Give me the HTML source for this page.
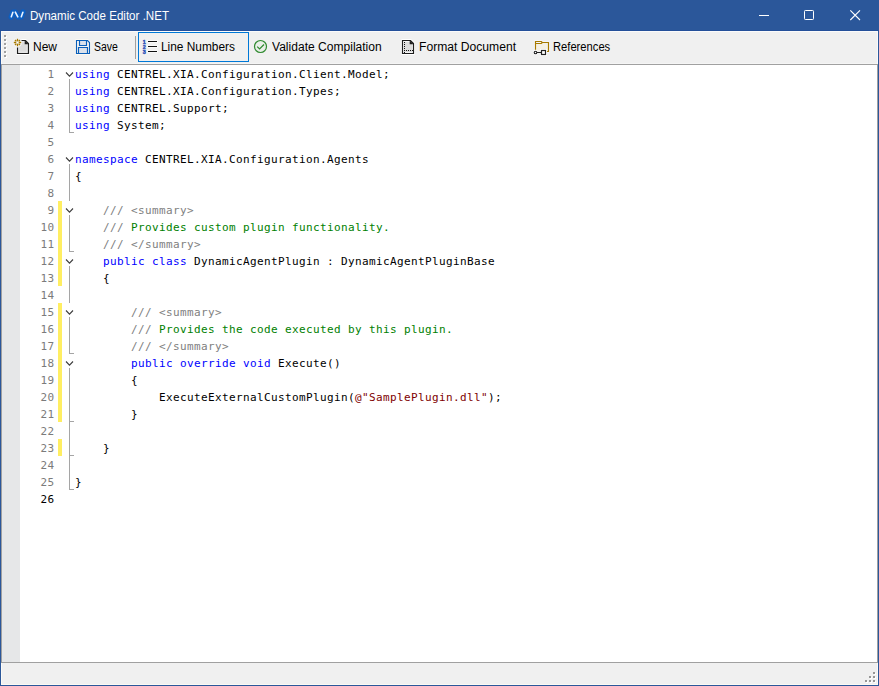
<!DOCTYPE html>
<html><head><meta charset="utf-8"><title>Dynamic Code Editor .NET</title>
<style>
html,body{margin:0;padding:0;}
body{width:879px;height:686px;overflow:hidden;background:#f0f0f0;position:relative;font-family:"Liberation Sans",sans-serif;font-size:12px;color:#000;}
.abs,#win *{position:absolute;}
#win{position:absolute;left:0;top:0;width:879px;height:686px;background:#f0f0f0;overflow:hidden;}
#title{left:0;top:0;width:879px;height:31px;background:#2b579a;}
#title .cap{left:30px;top:0;height:31px;line-height:31px;color:#fff;font-size:12px;white-space:nowrap;}
#bl{left:0;top:31px;width:1px;height:655px;background:#2b579a;}
#br{left:878px;top:31px;width:1px;height:655px;background:#2b579a;}
#bb{left:0;top:685px;width:879px;height:1px;background:#2b579a;}
#tb{left:1px;top:31px;width:877px;height:33px;background:#f0f0f0;}
.tbt{top:0;height:33px;line-height:32px;font-size:12px;white-space:nowrap;color:#000;}
#ed{left:1px;top:64px;width:877px;height:599px;background:#fff;box-sizing:border-box;border:1px solid #a0a0a0;}
#mg{left:2px;top:65px;width:18px;height:597px;background:#e6e7e8;}
.ln{left:21.5px;width:33px;height:17px;line-height:17px;text-align:right;color:#7b7b7b;font-family:"DejaVu Sans Mono","Liberation Mono",monospace;font-size:11px;letter-spacing:0.378px;}
.ln.cur{color:#000;}
.cl{left:75px;height:17px;line-height:17px;white-space:pre;font-family:"DejaVu Sans Mono","Liberation Mono",monospace;font-size:11px;letter-spacing:0.378px;color:#000;}
.cl span{position:static !important;}
.k{color:#0000ff;}.c{color:#808080;}.g{color:#008000;}.s{color:#800000;}
.yb{left:58px;width:4px;background:#ffee62;}
.fl{left:69px;width:1px;background:#a5a5a5;}
.ft{left:69px;width:5px;height:1px;background:#a5a5a5;}
.cv{left:65px;background:#fff;}

#title .cap{transform-origin:0 50%;transform:scaleX(0.965);top:1px;}
#tdark{left:0;top:30px;width:879px;height:1px;background:#24509a;}
.tbt{transform-origin:0 50%;}
#tbhl{left:0;top:0;width:877px;height:1px;background:#fbfbfb;}
#tbhl2{left:0;top:0;width:1px;height:33px;background:#fcfaf6;}
#tbhl3{left:0;top:32px;width:877px;height:1px;background:#f5f5f5;}
#tbhl4{left:876px;top:0;width:1px;height:33px;background:#f9f9f9;}
#sep1{left:134px;top:5px;width:1px;height:23px;background:#a0a0a0;}
#lnbtn{left:137px;top:1px;width:111px;height:30px;box-sizing:border-box;border:1px solid #0078d7;background:#f0f0f0;}
#sb{left:1px;top:663px;width:877px;height:22px;background:#f0f0f0;}
</style></head><body>
<div id="win">
<div id="title">
<svg style="left:8px;top:8px" width="18" height="13" viewBox="8 8 18 13">
<path d="M11.2 17L13 12H15.2L18 17H21.2L23 12" fill="none" stroke="#0c5fc2" stroke-width="5.2" stroke-linecap="round" stroke-linejoin="round"/>
<path d="M11.3 16.8L12.9 12.2" stroke="#eaf3ff" stroke-width="1.6" fill="none" stroke-linecap="round"/>
<path d="M15.3 12.2L17.8 16.8" stroke="#eaf3ff" stroke-width="1.6" fill="none" stroke-linecap="round"/>
<path d="M21.3 16.8L22.9 12.2" stroke="#eaf3ff" stroke-width="1.6" fill="none" stroke-linecap="round"/>
</svg>
<div class="cap">Dynamic Code Editor .NET</div>
<svg style="left:750px;top:0" width="129" height="31" viewBox="750 0 129 31" shape-rendering="crispEdges">
<rect x="759" y="15" width="10" height="1" fill="#fff"/>
<rect x="804.5" y="10.5" width="9" height="9" rx="0.8" fill="none" stroke="#fff" stroke-width="1" shape-rendering="geometricPrecision"/>
<path d="M850.3 10.3L860 20M860 10.3L850.3 20" stroke="#fff" stroke-width="1.1" fill="none" shape-rendering="geometricPrecision"/>
</svg>
<div id="tdark"></div>
</div>
<div id="tb">
<div id="tbhl"></div><div id="tbhl2"></div><div id="tbhl3"></div><div id="tbhl4"></div>
<svg id="grip" style="left:3px;top:4px" width="4" height="24" viewBox="0 0 4 24" shape-rendering="crispEdges">
<g fill="#fff"><rect x="1" y="1" width="2" height="2"/><rect x="1" y="5" width="2" height="2"/><rect x="1" y="9" width="2" height="2"/><rect x="1" y="13" width="2" height="2"/><rect x="1" y="17" width="2" height="2"/><rect x="1" y="21" width="2" height="2"/></g>
<g fill="#a0a0a0"><rect x="0" y="0" width="2" height="2"/><rect x="0" y="4" width="2" height="2"/><rect x="0" y="8" width="2" height="2"/><rect x="0" y="12" width="2" height="2"/><rect x="0" y="16" width="2" height="2"/><rect x="0" y="20" width="2" height="2"/></g>
</svg>
<!-- New icon -->
<svg style="left:11px;top:7px" width="18" height="17" viewBox="12 38 18 17">
<path d="M17.5 47.5V53.5H28.5V43.5L25.5 40.5H21.5" fill="none" stroke="#fff" stroke-width="3" stroke-linejoin="round"/>
<path d="M18 41H25.5L28 43.5V53H18Z" fill="#dcdcdc"/>
<path d="M18.8 41.8H25.2V43.8H27.2V52.2H18.8Z" fill="none" stroke="#f4f4f4" stroke-width="0.6"/>
<circle cx="17.5" cy="42.5" r="4.6" fill="#f4f4f4"/>
<path d="M17.5 47.5V53.5H28.5V43.5L25.5 40.5H21.5" fill="none" stroke="#1e1e1e" stroke-width="1.2"/>
<path d="M24.7 40.3V44.3H28.7Z" fill="#1e1e1e"/>
<g stroke="#a87a00" stroke-width="1.3" stroke-linecap="butt"><path d="M17.5 38.8V41.5M17.5 43.5V46.2M13.8 42.5H16.5M18.5 42.5H21.2"/><path d="M15 40L16.3 41.3M20 40L18.7 41.3M15 45L16.3 43.7M20 45L18.7 43.7" stroke-width="1.3"/></g>
<path d="M17.5 41.4L18.6 42.5L17.5 43.6L16.4 42.5Z" fill="#fff"/>
</svg>
<div class="tbt" style="left:32px;">New</div>
<!-- Save icon -->
<svg style="left:74px;top:8px" width="16" height="16" viewBox="75 39 16 16">
<path d="M76.5 40.5H87.5L89.5 42.5V53.5H76.5Z" fill="#f4f4f4" stroke="#fbf8f2" stroke-width="3" stroke-linejoin="round"/>
<rect x="80" y="41" width="6" height="4" fill="#dbe2ec"/><rect x="79" y="48" width="8" height="5" fill="#dbe2ec"/>
<path d="M76.5 40.5H87.5L89.5 42.5V53.5H76.5Z" fill="none" stroke="#0a5fba" stroke-width="1.15"/>
<path d="M79.5 40.5V45.5H86.5V40.5" fill="none" stroke="#0a5fba" stroke-width="1.15"/>
<path d="M78.5 53.5V47.5H87.5V53.5" fill="none" stroke="#0a5fba" stroke-width="1.15"/>
</svg>
<div class="tbt" style="left:93px;transform:scaleX(0.875)">Save</div>
<div id="sep1"></div>
<div id="lnbtn"></div>
<!-- Line numbers icon -->
<svg style="left:141px;top:7px" width="18" height="17" viewBox="142 38 18 17">
<g fill="#f8f8f8"><rect x="147" y="40" width="11" height="3"/><rect x="147" y="45" width="11" height="3"/><rect x="147" y="50" width="11" height="3"/></g>
<g fill="#111" shape-rendering="crispEdges"><rect x="148" y="41" width="9" height="1"/><rect x="148" y="46" width="9" height="1"/><rect x="148" y="51" width="9" height="1"/></g>
<g font-family="Liberation Sans, sans-serif" font-size="5.4" font-weight="bold" fill="#2f55b8" stroke="#2f55b8" stroke-width="0.45"><text x="142.8" y="43.9">1</text><text x="142.8" y="48.9">2</text><text x="142.8" y="53.9">3</text></g>
</svg>
<div class="tbt" style="left:160px;transform:scaleX(0.99)">Line Numbers</div>
<!-- Validate icon -->
<svg style="left:252px;top:7px" width="16" height="16" viewBox="253 38 16 16">
<circle cx="260.5" cy="46.5" r="6" fill="#e9efe8" stroke="#2f8a2f" stroke-width="1.2"/>
<path d="M257.2 46.6L259.6 49L264 44.5" fill="none" stroke="#2f8a2f" stroke-width="1.2"/>
</svg>
<div class="tbt" style="left:271px;transform:scaleX(1.005)">Validate Compilation</div>
<!-- Format icon -->
<svg style="left:400px;top:7px" width="16" height="18" viewBox="401 38 16 18">
<path d="M402.5 40.5H410.5L413.5 43.5V53.5H402.5Z" fill="#dcdcdc" stroke="#fff" stroke-width="3" stroke-linejoin="round"/>
<path d="M403.5 41.5H410L412.5 44V52.5H403.5Z" fill="#dcdcdc" stroke="#f6f6f6" stroke-width="1"/>
<path d="M402.5 40.5H410.5L413.5 43.5V53.5H402.5Z" fill="none" stroke="#1e1e1e" stroke-width="1.2"/>
<path d="M409.7 40.3V44.3H413.7Z" fill="#1e1e1e"/>
<g fill="#111" shape-rendering="crispEdges"><rect x="404" y="42" width="1" height="1"/><rect x="404" y="44" width="1" height="1"/><rect x="404" y="46" width="1" height="1"/><rect x="404" y="48" width="1" height="1"/><rect x="404" y="50" width="1" height="1"/><rect x="404" y="52" width="1" height="1"/><rect x="406" y="50" width="1" height="1"/><rect x="408" y="50" width="1" height="1"/><rect x="410" y="50" width="1" height="1"/><rect x="412" y="50" width="1" height="1"/></g>
</svg>
<div class="tbt" style="left:418px;transform:scaleX(1.011)">Format Document</div>
<!-- References icon -->
<svg style="left:531px;top:7px" width="20" height="19" viewBox="532 38 20 19">
<path d="M535.5 49.5V41.5H541.5L542.5 42.5H548.5V51.5H547" fill="#f5f0e4" stroke="#f6f6fa" stroke-width="3" stroke-linejoin="round"/>
<path d="M536 43H548V51H536Z" fill="#f5f0e4"/>
<path d="M535.5 49.8V41.5H541.3L542.3 42.5H548.5V51.5H547" fill="none" stroke="#a87a00" stroke-width="1.15"/>
<path d="M535.5 43.5H541.3L542.3 42.5" fill="none" stroke="#a87a00" stroke-width="1.15"/>
<path d="M537 52.5H541" stroke="#fff" stroke-width="3"/>
<circle cx="535.5" cy="52.5" r="2.4" fill="#fff"/><rect x="540" y="49" width="7" height="7" fill="#fff"/>
<circle cx="535.5" cy="52.5" r="1.3" fill="#fff" stroke="#222" stroke-width="1.1"/>
<path d="M537 52.5H541" stroke="#222" stroke-width="1.1"/>
<rect x="541.5" y="50.5" width="4" height="4" fill="#fff" stroke="#222" stroke-width="1.2"/>
</svg>
<div class="tbt" style="left:552px;transform:scaleX(0.932)">References</div>
</div>
<div id="ed"></div>
<div id="mg"></div>
<div class="yb" style="top:201px;height:85px"></div>
<div class="yb" style="top:303px;height:119px"></div>
<div class="yb" style="top:439px;height:17px"></div>
<div class="fl" style="top:79px;height:54px"></div>
<div class="ft" style="top:132px"></div>
<div class="fl" style="top:164px;height:326px"></div>
<div class="ft" style="top:489px"></div>
<div class="ft" style="top:251px"></div>
<div class="ft" style="top:353px"></div>
<div class="ft" style="top:421px"></div>
<div class="ft" style="top:455px"></div>
<svg class="cv" style="top:65px" width="9" height="14" viewBox="0 -7 9 14"><path d="M1 0.5 L4.5 4.2 L8 0.5" fill="none" stroke="#3c3c3c" stroke-width="1.1"/></svg>
<svg class="cv" style="top:150px" width="9" height="14" viewBox="0 -7 9 14"><path d="M1 0.5 L4.5 4.2 L8 0.5" fill="none" stroke="#3c3c3c" stroke-width="1.1"/></svg>
<svg class="cv" style="top:201px" width="9" height="14" viewBox="0 -7 9 14"><path d="M1 0.5 L4.5 4.2 L8 0.5" fill="none" stroke="#3c3c3c" stroke-width="1.1"/></svg>
<svg class="cv" style="top:252px" width="9" height="14" viewBox="0 -7 9 14"><path d="M1 0.5 L4.5 4.2 L8 0.5" fill="none" stroke="#3c3c3c" stroke-width="1.1"/></svg>
<svg class="cv" style="top:303px" width="9" height="14" viewBox="0 -7 9 14"><path d="M1 0.5 L4.5 4.2 L8 0.5" fill="none" stroke="#3c3c3c" stroke-width="1.1"/></svg>
<svg class="cv" style="top:354px" width="9" height="14" viewBox="0 -7 9 14"><path d="M1 0.5 L4.5 4.2 L8 0.5" fill="none" stroke="#3c3c3c" stroke-width="1.1"/></svg>
<div class="ln" style="top:66px">1</div>
<div class="cl" style="top:66px"><span class="k">using</span> CENTREL.XIA.Configuration.Client.Model;</div>
<div class="ln" style="top:83px">2</div>
<div class="cl" style="top:83px"><span class="k">using</span> CENTREL.XIA.Configuration.Types;</div>
<div class="ln" style="top:100px">3</div>
<div class="cl" style="top:100px"><span class="k">using</span> CENTREL.Support;</div>
<div class="ln" style="top:117px">4</div>
<div class="cl" style="top:117px"><span class="k">using</span> System;</div>
<div class="ln" style="top:134px">5</div>
<div class="ln" style="top:151px">6</div>
<div class="cl" style="top:151px"><span class="k">namespace</span> CENTREL.XIA.Configuration.Agents</div>
<div class="ln" style="top:168px">7</div>
<div class="cl" style="top:168px">{</div>
<div class="ln" style="top:185px">8</div>
<div class="ln" style="top:202px">9</div>
<div class="cl" style="top:202px">    <span class="c">/// &lt;summary&gt;</span></div>
<div class="ln" style="top:219px">10</div>
<div class="cl" style="top:219px">    <span class="c">/// </span><span class="g">Provides custom plugin functionality.</span></div>
<div class="ln" style="top:236px">11</div>
<div class="cl" style="top:236px">    <span class="c">/// &lt;/summary&gt;</span></div>
<div class="ln" style="top:253px">12</div>
<div class="cl" style="top:253px">    <span class="k">public</span> <span class="k">class</span> DynamicAgentPlugin : DynamicAgentPluginBase</div>
<div class="ln" style="top:270px">13</div>
<div class="cl" style="top:270px">    {</div>
<div class="ln" style="top:287px">14</div>
<div class="ln" style="top:304px">15</div>
<div class="cl" style="top:304px">        <span class="c">/// &lt;summary&gt;</span></div>
<div class="ln" style="top:321px">16</div>
<div class="cl" style="top:321px">        <span class="c">/// </span><span class="g">Provides the code executed by this plugin.</span></div>
<div class="ln" style="top:338px">17</div>
<div class="cl" style="top:338px">        <span class="c">/// &lt;/summary&gt;</span></div>
<div class="ln" style="top:355px">18</div>
<div class="cl" style="top:355px">        <span class="k">public</span> <span class="k">override</span> <span class="k">void</span> Execute()</div>
<div class="ln" style="top:372px">19</div>
<div class="cl" style="top:372px">        {</div>
<div class="ln" style="top:389px">20</div>
<div class="cl" style="top:389px">            ExecuteExternalCustomPlugin(<span class="s">@&quot;SamplePlugin.dll&quot;</span>);</div>
<div class="ln" style="top:406px">21</div>
<div class="cl" style="top:406px">        }</div>
<div class="ln" style="top:423px">22</div>
<div class="ln" style="top:440px">23</div>
<div class="cl" style="top:440px">    }</div>
<div class="ln" style="top:457px">24</div>
<div class="ln" style="top:474px">25</div>
<div class="cl" style="top:474px">}</div>
<div class="ln cur" style="top:491px">26</div>
<div id="sb">
<div style="left:876px;top:0;width:1px;height:22px;background:#fbf9f4"></div>
<div style="left:0;top:0;width:1px;height:22px;background:#fcfaf6"></div>
<div style="left:0;top:21px;width:877px;height:1px;background:#fbf9f4"></div>
<svg style="left:864px;top:9px" width="11" height="11" viewBox="0 0 11 11" shape-rendering="crispEdges">
<g fill="#fff"><rect x="9" y="1" width="2" height="2"/><rect x="5" y="5" width="2" height="2"/><rect x="9" y="5" width="2" height="2"/><rect x="1" y="9" width="2" height="2"/><rect x="5" y="9" width="2" height="2"/><rect x="9" y="9" width="2" height="2"/></g>
<g fill="#969696"><rect x="8" y="0" width="2" height="2"/><rect x="4" y="4" width="2" height="2"/><rect x="8" y="4" width="2" height="2"/><rect x="0" y="8" width="2" height="2"/><rect x="4" y="8" width="2" height="2"/><rect x="8" y="8" width="2" height="2"/></g>
</svg>
</div>
<div id="bl"></div><div id="br"></div><div id="bb"></div>
</div>
</body></html>
